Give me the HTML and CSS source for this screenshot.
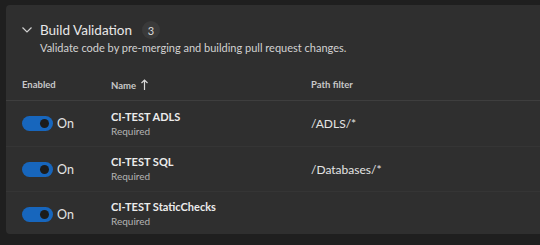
FILE: index.html
```html
<!DOCTYPE html>
<html lang="en">
  <head>
    <meta charset="UTF-8" />
    <meta name="viewport" content="width=device-width, initial-scale=1.0" />
    <title>Branch policies</title>
    <link rel="stylesheet" href="styles.css">
  </head>
  <body>
    <section class="card">
      <div class="section-header">
        <svg class="chevron" width="10" height="6" viewBox="0 0 10 6"><path d="M0.5 0.5 L5 5 L9.5 0.5" fill="none" stroke="#d0d0d0" stroke-width="1.2"/></svg>
        <h2>Build Validation</h2>
        <span class="badge">3</span>
      </div>
      <p class="subtitle">Validate code by pre-merging and building pull request changes.</p>

      <div class="table">
        <div class="row head">
          <div class="cell">Enabled</div>
          <div class="cell">Name
            <svg class="sort" width="7" height="11" viewBox="0 0 7 11"><path d="M3.5 11 V1 M0.5 4 L3.5 1 L6.5 4" fill="none" stroke="#d8d8d8" stroke-width="1.2"/></svg>
          </div>
          <div class="cell">Path filter</div>
        </div>

        <div class="row">
          <div class="cell toggle-cell"><span class="toggle"><span class="knob"></span></span> On</div>
          <div class="cell name"><strong>CI-TEST ADLS</strong><span>Required</span></div>
          <div class="cell path">/ADLS/*</div>
        </div>
        <div class="row">
          <div class="cell toggle-cell"><span class="toggle"><span class="knob"></span></span> On</div>
          <div class="cell name"><strong>CI-TEST SQL</strong><span>Required</span></div>
          <div class="cell path">/Databases/*</div>
        </div>
        <div class="row">
          <div class="cell toggle-cell"><span class="toggle"><span class="knob"></span></span> On</div>
          <div class="cell name"><strong>CI-TEST StaticChecks</strong><span>Required</span></div>
          <div class="cell path"></div>
        </div>
      </div>
    </section>
  </body>
</html>
```

FILE: styles.css
```css
* {
  margin: 0;
  padding: 0;
  box-sizing: border-box;
  font-family: "Segoe UI", Lato, "Noto Sans", sans-serif;
}

body {
  background-color: #1f1f1f;
  color: #e4e4e4;
  padding: 5px 0 0 6px;
  overflow: hidden;
  width: 540px;
  height: 245px;
}

.card {
  background-color: #2f2f2f;
  border-radius: 4px;
  width: 560px;
  height: 229px;
  padding-top: 15px;
  overflow: hidden;
}

.section-header {
  display: flex;
  align-items: center;
  padding-left: 16px;
  height: 20px;
}

.chevron {
  margin-right: 8px;
}

.section-header h2 {
  font-size: 13.5px;
  font-weight: 400;
  color: #e8e8e8;
  line-height: 20px;
}

.badge {
  display: inline-flex;
  align-items: center;
  justify-content: center;
  width: 18px;
  height: 18px;
  border-radius: 50%;
  background-color: #3a3a3a;
  font-size: 11px;
  color: #d8d8d8;
  margin-left: 10px;
}

.subtitle {
  padding-left: 34px;
  font-size: 11px;
  line-height: 16px;
  color: #d2d2d2;
}

.table {
  margin-top: 13px;
}

.row {
  display: grid;
  grid-template-columns: 89px 200px 1fr;
  align-items: center;
  height: 45px;
  padding-left: 16px;
  border-top: 1px solid #353535;
}

.row.head {
  height: 32px;
  border-top: none;
  border-bottom: 1px solid #3e3e3e;
  font-size: 9.5px;
  font-weight: 700;
  color: #c8c8c8;
}

.row.head + .row {
  border-top: none;
}

.sort {
  vertical-align: -1px;
  margin-left: 3px;
}

.toggle-cell {
  display: flex;
  align-items: center;
  font-size: 12.5px;
}

.toggle {
  position: relative;
  display: inline-block;
  width: 31px;
  height: 15px;
  border-radius: 8px;
  background-color: #1766bd;
  margin-right: 4px;
}

.knob {
  position: absolute;
  right: 4px;
  top: 3px;
  width: 9px;
  height: 9px;
  border-radius: 50%;
  background-color: #1c1c1c;
}

.name {
  display: flex;
  flex-direction: column;
}

.name strong {
  font-size: 11px;
  font-weight: 700;
  line-height: 15px;
  color: #ececec;
}

.name span {
  font-size: 10px;
  line-height: 15px;
  color: #b4b4b4;
}

.path {
  font-size: 12px;
  color: #e4e4e4;
}
```
